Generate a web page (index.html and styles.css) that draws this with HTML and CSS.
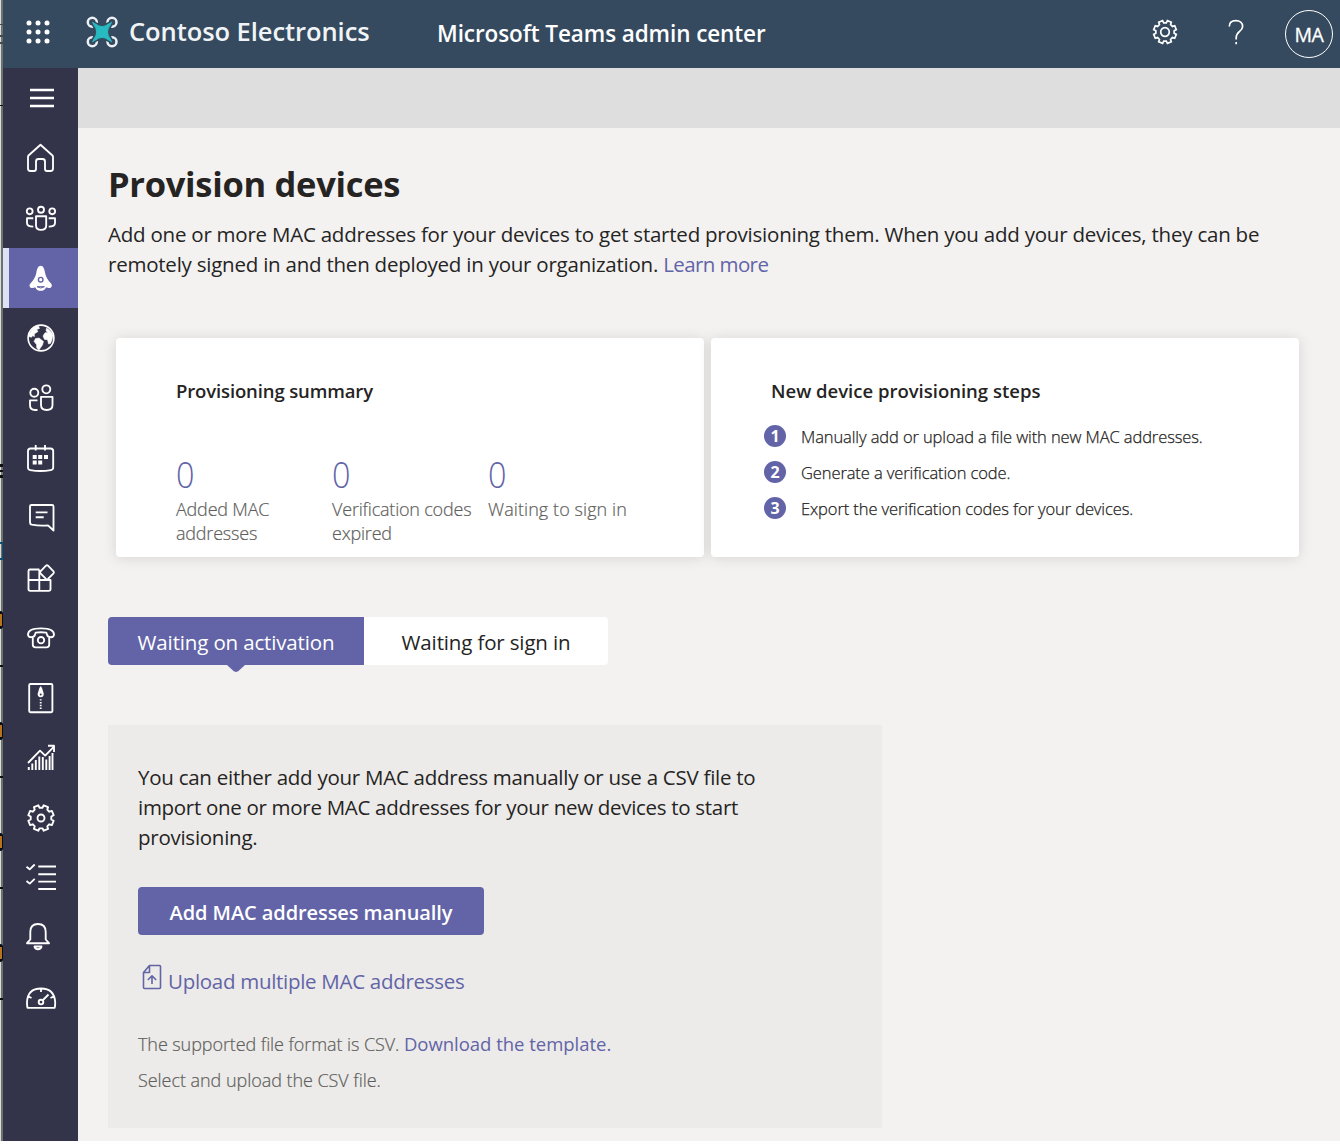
FILE: index.html
```html
<!DOCTYPE html>
<html lang="en">
<head>
<meta charset="utf-8">
<title>Microsoft Teams admin center</title>
<link rel="stylesheet" href="styles.css">
</head>
<body>
<div class="window">
  <svg class="edge" width="3" height="1141" viewBox="0 0 3 1141" aria-hidden="true">
    <rect width="1" height="1141" fill="#dcdcdc"/><rect x="1" width="2" height="1141" fill="#6c726e"/>
    <g fill="#444a4c"><rect y="24" width="3" height="1"/><rect y="35" width="3" height="2"/><rect y="42" width="3" height="2"/></g>
    <g fill="#111"><rect y="105" width="3" height="1"/><rect y="464" width="3" height="3"/><rect y="470" width="3" height="2"/><rect y="475" width="3" height="3"/></g>
    <g fill="#0b5275"><rect y="542" width="3" height="2"/><rect x="2" y="542" width="1" height="16"/><rect y="558" width="3" height="2"/></g>
    <g fill="#050d14"><rect x="-4" y="611" width="7" height="18" rx="3"/><rect x="-4" y="722" width="7" height="18" rx="3"/><rect x="-4" y="833" width="7" height="18" rx="3"/><rect x="-4" y="944" width="7" height="18" rx="3"/></g>
    <g fill="#b8731c"><rect y="614" width="2" height="12"/><rect y="725" width="2" height="12"/><rect y="836" width="2" height="12"/><rect y="947" width="2" height="12"/></g>
    <g fill="#111"><rect y="665" width="3" height="2"/><rect y="776" width="3" height="2"/><rect y="887" width="3" height="2"/><rect y="998" width="3" height="2"/></g>
  </svg>
  <div class="app">
    <header class="topbar">
      <svg class="waffle" width="24" height="24" viewBox="0 0 24 24"><g fill="#fff"><circle cx="3" cy="3" r="2.5"/><circle cx="12" cy="3" r="2.5"/><circle cx="21" cy="3" r="2.5"/><circle cx="3" cy="12" r="2.5"/><circle cx="12" cy="12" r="2.5"/><circle cx="21" cy="12" r="2.5"/><circle cx="3" cy="21" r="2.5"/><circle cx="12" cy="21" r="2.5"/><circle cx="21" cy="21" r="2.5"/></g></svg>
      <svg class="logo" width="32" height="32" viewBox="0 0 32 32"><g fill="none" stroke="#eef1f4" stroke-width="2.5"><circle cx="6.300" cy="6.200" r="4.500"/><circle cx="26" cy="6.200" r="4.500"/><circle cx="6.300" cy="25.800" r="4.500"/><circle cx="26" cy="25.800" r="4.500"/></g><path d="M6.500 6.300Q16.100 13 25.700 6.300Q19.500 16 25.700 25.700Q16.100 19 6.500 25.700Q12.700 16 6.500 6.300Z" fill="none" stroke="#354a5f" stroke-width="3.500" stroke-linejoin="round"/><path d="M6.500 6.300L12.500 9.800Q16.100 11.500 19.700 9.800L25.700 6.300L22.300 12.300Q20.600 16 22.300 19.700L25.700 25.700L19.700 22.200Q16.100 20.500 12.500 22.200L6.500 25.700L9.900 19.700Q11.600 16 9.900 12.300Z" fill="#27bac1" stroke="#27bac1" stroke-width="1" stroke-linejoin="round"/></svg>
      <span class="brand">Contoso Electronics</span>
      <span class="product">Microsoft Teams admin center</span>
      <div class="tools">
        <svg width="28" height="28" viewBox="-14 -14 28 28" class="line"><path stroke-width="1.9" transform="scale(.89)" d="M10.300 1.450L12.700 2.700L10.900 7.100L8.300 6.260L6.260 8.300L7.100 10.900L2.700 12.700L1.450 10.300L-1.450 10.300L-2.700 12.700L-7.100 10.900L-6.260 8.300L-8.300 6.260L-10.900 7.100L-12.700 2.700L-10.300 1.450L-10.300 -1.450L-12.700 -2.700L-10.900 -7.100L-8.300 -6.260L-6.260 -8.300L-7.100 -10.900L-2.700 -12.700L-1.450 -10.300L1.450 -10.300L2.700 -12.700L7.100 -10.900L6.260 -8.300L8.300 -6.260L10.900 -7.100L12.700 -2.700L10.300 -1.450Z"/><circle r="4.300"/></svg>
        <svg class="help line" width="20" height="28" viewBox="0 0 20 28"><path d="M3.300 8.500C3.300 4.500 6 2.700 9.800 2.700C13.800 2.700 16.600 5 16.600 8.400C16.600 13.500 10.200 13.500 10.200 19.500V21.500M10.200 24V26.200"/></svg>
        <span class="avatar">MA</span>
      </div>
    </header>
    <div class="body">
      <nav class="rail">
        <a><svg viewBox="0 0 40 40"><path stroke-width="2.700" d="M9 12H33M9 20H33M9 28H33"/></svg></a>
        <a><svg viewBox="0 0 40 40"><path d="M19.500 6.800L31.200 17.300Q32 18 32 19V30.500Q32 33 29.500 33H26Q24 33 24 31V23.500Q24 21 21.500 21H17.500Q15 21 15 23.500V31Q15 33 13 33H9.500Q7 33 7 30.500V19Q7 18 7.800 17.300Z"/></svg></a>
        <a><svg viewBox="0 0 40 40"><circle cx="8.700" cy="13.300" r="2.900"/><circle cx="20" cy="11.700" r="3"/><circle cx="31.200" cy="13.300" r="2.900"/><path d="M15 18.200H25.200V27.500Q25.200 31.800 20.100 31.800Q15 31.800 15 27.500ZM12.300 20.200H6V25Q6 28.600 12.300 28.600M27.700 20.200H34V25Q34 28.600 27.700 28.600"/></svg></a>
        <a class="on"><svg viewBox="0 0 40 40"><path fill="#fff" stroke="none" d="M19.700 7.700C22.300 7.700 23.300 10.500 24 14.500C24.800 19 27 22.500 29.800 25.200C31.500 26.800 31 29.500 29 30C27 30.500 26 29 24.800 29.700C24 33.800 15.400 33.800 14.600 29.700C13.400 29 12.400 30.500 10.400 30C8.400 29.500 7.900 26.800 9.600 25.200C12.400 22.500 14.600 19 15.400 14.500C16.100 10.500 17.100 7.700 19.700 7.700Z"/><circle cx="19.700" cy="21.700" r="2.300" stroke="#6264a7" stroke-width="1.400"/><path stroke="#6264a7" stroke-width="1" d="M16 28.700Q19.700 31.300 23.400 28.700Z"/></svg></a>
        <a><svg viewBox="0 0 40 40"><circle cx="20" cy="20" r="12.900" stroke-width="1.600"/><g fill="#fff" stroke-width=".5"><path d="M9.500 14Q12 9 17.500 8L18.500 10.500L15.700 11.500L17 13.500L13.300 16L13.500 18.500L11.500 17.800L10.500 19.300L7.300 18.500Q7.600 16 9.500 14Z"/><path d="M14.500 20.500L18 20L22.500 23.500L21.500 27L18 32L15.700 30L15.500 26.500L13 23.500Z"/><path d="M25.500 10Q30.500 12.500 32 17.500L31 22L29.500 25.500L27.500 26L26.500 21.700L23.500 21.500L22 18L24 14.800L27 14.500L25 13Z"/></g></svg></a>
        <a><svg viewBox="0 0 40 40"><circle cx="13.300" cy="14.700" r="4"/><circle cx="25.300" cy="11.300" r="4"/><path d="M20 18.800H31.500V27Q31.500 32 25.700 32Q20 32 20 27ZM16.500 22.300H9V27Q9 32 14 32H16.500"/></svg></a>
        <a><svg viewBox="0 0 40 40"><path d="M9.500 10.500H29.500Q32.200 10.500 32.200 13.200V29.500Q32.200 31.700 29.800 32.100Q19.500 33.800 9.200 32.100Q7 31.700 7 29.500V13.200Q7 10.500 9.500 10.500ZM14.700 7V12.500M24 7V12.500"/><path fill="#fff" stroke="none" d="M11.700 17h4v4h-4zM17.200 17h4v4h-4zM23 17h4v4h-4zM11.700 22.500h4v4h-4zM17.200 22.500h4v4h-4z"/></svg></a>
        <a><svg viewBox="0 0 40 40"><path d="M10.500 7H31Q32.500 7 32.500 8.500V32.500L27 27.400Q18 28 10.800 26.700Q9 26.300 9 24.500V8.500Q9 7 10.500 7ZM14.700 14.300H26.500M14.700 19.200H22.700"/></svg></a>
        <a><svg viewBox="0 0 40 40"><path d="M18.300 11.500H9Q7.500 11.500 7.500 13V31Q7.500 32.800 9.300 32.800H27.700Q29.500 32.800 29.500 31V22H7.500M18.300 11.500V32.800M18.300 12V15M25 7.700Q26 6.800 27 7.700L32.500 13.300Q33.300 14.300 32.500 15.300L27 20.900Q26 21.800 25 20.900L19.500 15.300Q18.700 14.300 19.500 13.300Z"/></svg></a>
        <a><svg viewBox="0 0 40 40"><path d="M7 16.500Q7 10.300 20 10.300Q33 10.300 33 16.500Q33 19.300 29.700 19.200Q26.500 19 26 16.500L25.300 14.700Q20 13.700 14.700 14.700L14 16.500Q13.500 19 10.300 19.200Q7 19.300 7 16.500ZM11.800 20V26.500Q11.800 29.300 14.600 29.300H25.400Q28.200 29.300 28.200 26.500V20"/><circle cx="20" cy="22.200" r="3.200"/></svg></a>
        <a><svg viewBox="0 0 40 40"><rect x="8.200" y="6" width="23.200" height="28.200" rx="1.200"/><path fill="#fff" stroke="none" d="M19.700 8L21 10L22.700 15.500Q23 19.300 19.700 19.300Q16.400 19.300 16.700 15.500L18.400 10Z"/><circle cx="19.700" cy="16.500" r="1" fill="#33344a" stroke="none"/><path d="M19.700 21.200V31" stroke-dasharray="1.400 1.400"/></svg></a>
        <a><svg viewBox="0 0 40 40"><path d="M7 25L19 12.700L24.200 17.600L32.500 9.200M27 7.700H33V14"/><path stroke-width="1.900" d="M7.800 32V29M11.300 32V25.500M14.800 32V22M18.300 32V18.500M21.800 32V19M25.300 32V21.500M28.600 32V18M31.500 32V15"/></svg></a>
        <a><svg viewBox="0 0 40 40"><path transform="translate(20 20)" d="M10.300 1.450L12.700 2.700L10.900 7.100L8.300 6.260L6.260 8.300L7.100 10.900L2.700 12.700L1.450 10.300L-1.450 10.300L-2.700 12.700L-7.100 10.900L-6.260 8.300L-8.300 6.260L-10.900 7.100L-12.700 2.700L-10.300 1.450L-10.300 -1.450L-12.700 -2.700L-10.900 -7.100L-8.300 -6.260L-6.260 -8.300L-7.100 -10.900L-2.700 -12.700L-1.450 -10.300L1.450 -10.300L2.700 -12.700L7.100 -10.900L6.260 -8.300L8.300 -6.260L10.900 -7.100L12.700 -2.700L10.300 -1.450Z"/><circle cx="20" cy="20" r="3.500"/></svg></a>
        <a><svg viewBox="0 0 40 40"><path d="M17.300 8.500H35M17.300 16.200H35M17.300 23.600H35M17.300 31H35M5.500 8.700L8.700 11.300L13.700 6.500M5.500 23L8.700 25.600L13.700 20.800"/></svg></a>
        <a><svg viewBox="0 0 40 40"><path d="M9.300 21.500V14Q9.300 6 17 6Q24.700 6 24.700 14V21.500L28 25.200H6ZM13.500 28.500Q14 31.200 17 31.200Q20 31.200 20.500 28.500Z"/></svg></a>
        <a><svg viewBox="0 0 40 40"><path d="M6.500 29.800Q6 28 6 24.500Q6.500 10.500 20 10.500Q33.500 10.500 34.200 24.500Q34.200 28 33.700 29.800ZM20 11V14M7.500 18.500L10.500 20M32.500 18.500L29.500 20M22 22L27.500 16.500"/><circle cx="20" cy="24" r="2.300"/></svg></a>
      </nav>
      <main class="main">
        <div class="band"></div>
        <div class="content">
          <h1>Provision devices</h1>
          <p class="intro">Add one or more MAC addresses for your devices to get started provisioning them. When you add your devices, they can be<br>remotely signed in and then deployed in your organization. <a class="link learn">Learn more</a></p>
          <div class="cards">
            <section class="card">
              <h2 class="tight">Provisioning summary</h2>
              <div class="stats">
                <div><b>0</b><span>Added MAC addresses</span></div>
                <div><b>0</b><span>Verification codes expired</span></div>
                <div><b>0</b><span class="wide">Waiting to sign in</span></div>
              </div>
            </section>
            <section class="card">
              <h2>New device provisioning steps</h2>
              <ol class="steps">
                <li><i>1</i>Manually add or upload a file with new MAC addresses.</li>
                <li><i>2</i>Generate a verification code.</li>
                <li><i>3</i>Export the verification codes for your devices.</li>
              </ol>
            </section>
          </div>
          <div class="tabs"><a class="tab sel">Waiting on activation</a><a class="tab">Waiting for sign in</a></div>
          <section class="panel">
            <p class="lead">You can either add your MAC address manually or use a CSV file to<br><span class="snug">import one or more MAC addresses for your new devices to start</span><br>provisioning.</p>
            <button class="primary">Add MAC addresses manually</button>
            <a class="upload link"><svg width="20" height="26" viewBox="0 0 20 26"><path d="M7.500 1.500H17.500Q18.500 1.500 18.500 2.500V23.500Q18.500 24.500 17.500 24.500H2.500Q1.500 24.500 1.500 23.500V8.500ZM7.500 1.500V8.500H1.500M10 20V12M5.800 16L10 11.800L14.200 16"/></svg>Upload multiple MAC addresses</a>
            <p class="note">The supported file format is CSV. <a class="link">Download the template.</a></p>
            <p class="note second">Select and upload the CSV file.</p>
          </section>
        </div>
      </main>
    </div>
  </div>
</div>
</body>
</html>
```
FILE: styles.css
```css
* { box-sizing: border-box; }
body { margin: 0; background: #fff; color: #252423; font-family: "Open Sans", "Noto Sans", sans-serif; overflow: hidden; }
h1, h2, p, ol { margin: 0; padding: 0; }
.window { display: flex; width: 1340px; height: 1141px; }
.edge { flex: none; display: block; }
.app { flex: 1; display: flex; flex-direction: column; min-width: 0; }

.topbar { display: flex; align-items: center; height: 68px; background: #354a5f; color: #fff; white-space: nowrap; padding-left: 23px; }
.waffle { margin-top: -5px; }
.logo { margin: -5px 0 0 36px; }
.brand { width: 319px; padding-left: 11px; margin-top: -6px; color: #f1f4f6; font-size: 25.5px; font-weight: 600; letter-spacing: -.07px; }
.product { font-size: 22.5px; font-weight: 600; letter-spacing: -.09px; margin-top: -1px; }
.tools { display: flex; align-items: center; margin-left: auto; padding-right: 7px; }
.tools svg { margin-top: -4px; }
.tools .help { margin: -5px 39px 0 47px; }
.line { fill: none; stroke: #fff; stroke-width: 1.7; }
.avatar { width: 48px; height: 48px; border: 1px solid #fff; border-radius: 50%; font-size: 19.5px; line-height: 47px; text-align: center; letter-spacing: -.4px; -webkit-text-stroke: .3px #fff; }

.body { flex: 1; display: flex; min-height: 0; }
.rail { width: 75px; background: #33344a; }
.rail a { display: block; height: 60px; padding: 10px 0 0 18px; }
.rail .on { background: #6264a7; border-left: 6px solid #dfe1f6; padding-left: 12px; }
.rail svg { display: block; width: 40px; height: 40px; fill: none; stroke: #fff; stroke-width: 1.85; stroke-linejoin: round; }

.main { flex: 1; background: #f3f2f1; }
.band { height: 60px; background: #dedede; }
.content { padding: 32px 0 0 30px; }
h1 { font-size: 34.5px; font-weight: 700; line-height: 48px; letter-spacing: -.3px; }
.intro { margin-top: 11px; font-size: 20.5px; line-height: 30px; letter-spacing: -.23px; white-space: nowrap; }
.link { color: #6264a7; }
.learn { letter-spacing: -.6px; }

.cards { display: flex; gap: 7px; margin: 59px 0 0 8px; }
.card { width: 588px; height: 219px; padding: 38px 0 0 60px; background: #fff; border-radius: 4px; box-shadow: 0 1px 14px rgba(0, 0, 0, .12); }
h2 { font-size: 18.5px; font-weight: 600; line-height: 30px; }
.tight { letter-spacing: -.13px; }
.stats { display: grid; grid-template-columns: repeat(3, 156px); margin-top: 44px; }
.stats div { display: flex; flex-direction: column; }
.stats b { width: 21px; color: #6264a7; font-size: 36px; font-weight: 300; line-height: 48px; transform: scaleX(.9) translateY(1px); transform-origin: 0 50%; }
.stats span { width: 145px; margin-top: -1px; color: #605e5c; font-size: 18px; font-weight: 300; line-height: 24px; letter-spacing: -.2px; -webkit-text-stroke: .2px #605e5c; }
.stats .wide { letter-spacing: .08px; }
.steps { list-style: none; margin: 12px 0 0 -7px; }
.steps li { display: flex; align-items: center; gap: 15px; height: 36px; font-size: 16.5px; font-weight: 300; letter-spacing: -.1px; white-space: nowrap; -webkit-text-stroke: .25px #252423; }
.steps i { width: 22px; height: 22px; border-radius: 50%; background: #6264a7; color: #fff; font-size: 16px; font-style: normal; font-weight: 700; line-height: 22px; text-align: center; -webkit-text-stroke: 0; }

.tabs { display: flex; margin-top: 60px; }
.tab { position: relative; width: 244px; height: 48px; background: #fff; border-radius: 0 4px 4px 0; font-size: 20.5px; line-height: 50px; text-align: center; letter-spacing: -.15px; }
.sel { width: 256px; background: #6264a7; color: #fff; border-radius: 4px 0 0 4px; }
.sel::after { content: ""; position: absolute; left: 119px; top: 48px; width: 18px; height: 7px; background: #6264a7; clip-path: polygon(0 0, 100% 0, 62% 88%, 50% 100%, 38% 88%); }

.panel { display: flex; flex-direction: column; align-items: flex-start; width: 774px; height: 403px; margin-top: 60px; padding: 37px 30px 0; background: #ecebe9; white-space: nowrap; }
.lead { font-size: 20.5px; line-height: 30px; letter-spacing: -.26px; }
.snug { letter-spacing: -.3px; }
.primary { width: 346px; height: 48px; margin-top: 35px; padding: 2px 0 0; border: 0; border-radius: 4px; background: #6264a7; color: #fff; font: 600 20px "Open Sans", sans-serif; letter-spacing: -.08px; }
.upload { display: flex; align-items: center; height: 30px; margin: 31px 0 0 4px; font-size: 20.5px; letter-spacing: -.29px; }
.upload svg { margin: -8px 6px 0 0; fill: none; stroke: #6264a7; stroke-width: 1.6; stroke-linejoin: round; }
.note { margin-top: 30px; color: #605e5c; font-size: 18px; font-weight: 300; line-height: 36px; letter-spacing: -.08px; -webkit-text-stroke: .2px #605e5c; }
.note .link { font-size: 18.5px; font-weight: 400; letter-spacing: -.02px; -webkit-text-stroke: 0; }
.second { margin-top: 0; letter-spacing: -.05px; }
```
